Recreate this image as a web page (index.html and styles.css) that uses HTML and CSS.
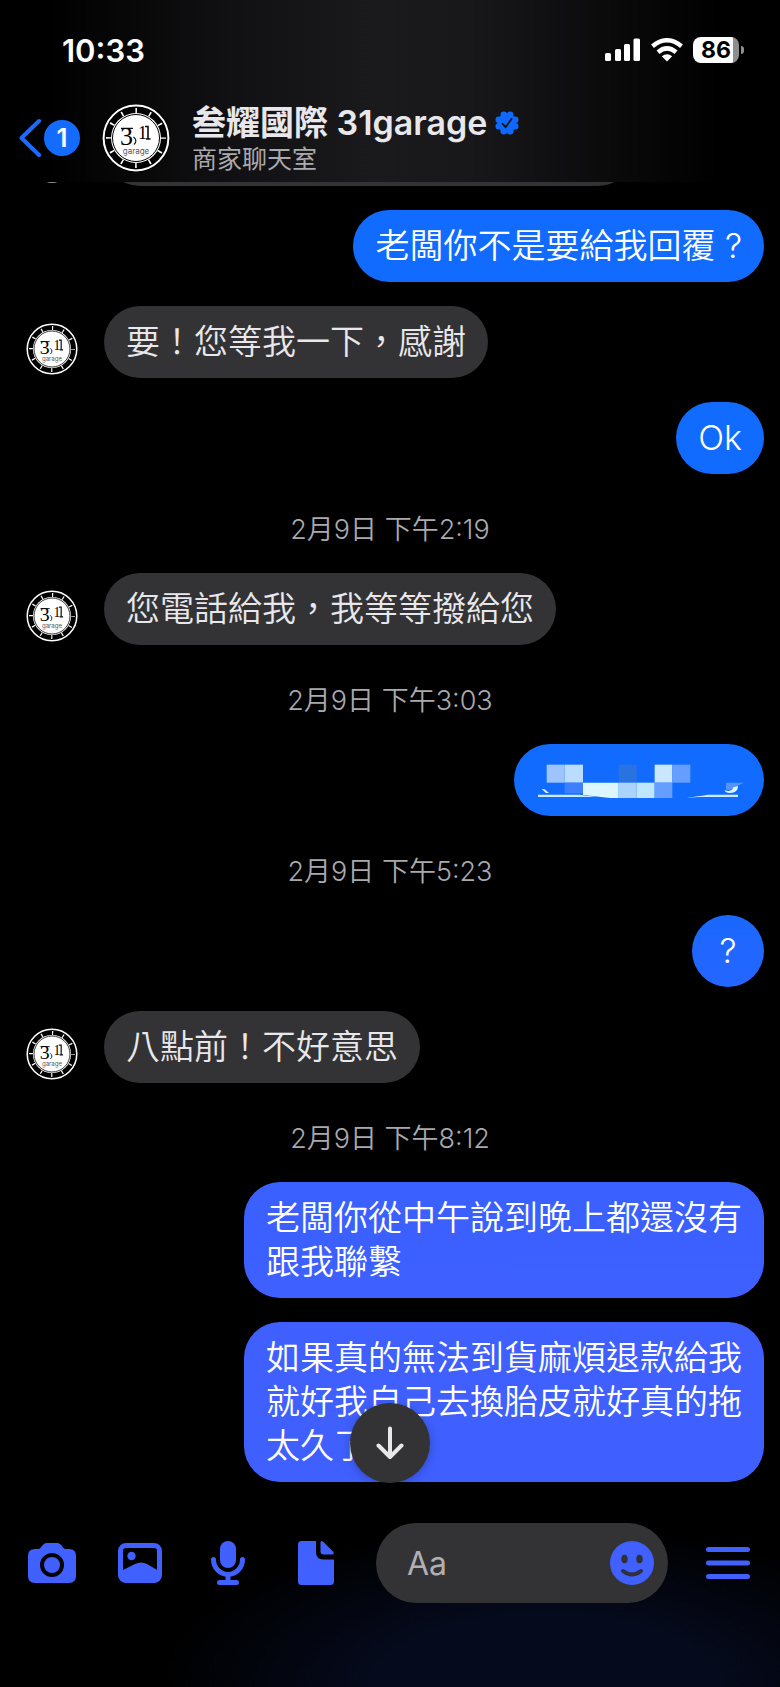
FILE: index.html
```html
<!DOCTYPE html>
<html lang="zh-Hant">
<head>
    <meta charset="UTF-8">
    <meta name="viewport" content="width=device-width, initial-scale=1.0">
    <title>叁耀國際 31garage</title>
    <link rel="stylesheet" href="styles.css">
</head>
<body>
    <svg class="sprite" aria-hidden="true">
        <symbol id="logo" viewBox="0 0 68 68">
            <circle cx="34" cy="34" r="34" fill="#000"/>
            <circle cx="34" cy="34" r="32.400" fill="none" stroke="#fff" stroke-width="2"/>
            <circle cx="34" cy="34" r="27.500" fill="none" stroke="#fff" stroke-width="5" stroke-dasharray="1.600 12.799" stroke-dashoffset="0.8"/>
            <circle cx="34" cy="34" r="25" fill="#fff"/>
            <circle cx="34" cy="34" r="23.500" fill="none" stroke="#000" stroke-width="1"/>
            <path d="M19 24.300H31M31.500 33q4.500 3.500 0.500 7.500" fill="none" stroke="#111" stroke-width="1.2"/>
            <text x="18" y="41" class="logo-three">3</text>
            <text x="36" y="35" class="logo-one">1</text>
            <path d="M43 22.5h3V35M44 35h4.500" fill="none" stroke="#111" stroke-width="1.6"/>
            <text x="34" y="50" class="logo-name">garage</text>
        </symbol>
    </svg>

    <header class="top">
        <div class="status-bar">
            <span class="clock">10:33</span>
            <div class="status-icons">
                <svg width="36" height="24" viewBox="0 0 36 24" fill="#fff">
                    <rect x="0" y="15" width="6" height="8" rx="1.5"/>
                    <rect x="10" y="11" width="6" height="12" rx="1.5"/>
                    <rect x="19" y="6" width="6" height="17" rx="1.5"/>
                    <rect x="28.500" y="0.500" width="6.500" height="22.500" rx="1.5"/>
                </svg>
                <svg width="32" height="24" viewBox="0 0 32 24" fill="none" stroke="#fff" stroke-width="4.500">
                    <path d="M1.500 8.200Q16 -3.600 30.500 8.200"/>
                    <path d="M7 14.200Q16 6.600 25 14.200"/>
                    <path d="M16 23.500L10.800 18.300Q16 14.300 21.200 18.300Z" fill="#fff" stroke="none"/>
                </svg>
                <div class="battery"><span>86</span></div>
            </div>
        </div>
        <div class="chat-bar">
            <a href="#" class="back" aria-label="返回">
                <svg width="24" height="40" viewBox="0 0 24 40" fill="none" stroke="#1a6cff" stroke-width="4" stroke-linecap="round" stroke-linejoin="round"><path d="M20 3L2.500 20L20 37"/></svg>
                <span class="unread">1</span>
            </a>
            <svg class="logo-large"><use href="#logo"/></svg>
            <div class="chat-title">
                <h1>叁耀國際 31garage
                    <svg width="24" height="24" viewBox="0 0 24 24">
                        <g fill="#0f69ff">
                            <circle cx="12" cy="12" r="9.500"/>
                            <circle cx="15.200" cy="3.800" r="3.300"/><circle cx="20.200" cy="8.800" r="3.300"/>
                            <circle cx="20.200" cy="15.200" r="3.300"/><circle cx="15.200" cy="20.200" r="3.300"/>
                            <circle cx="8.800" cy="20.200" r="3.300"/><circle cx="3.800" cy="15.200" r="3.300"/>
                            <circle cx="3.800" cy="8.800" r="3.300"/><circle cx="8.800" cy="3.800" r="3.300"/>
                        </g>
                        <path d="M7.500 12.800l3.200 3.200 5.800-8" fill="none" stroke="#141416" stroke-width="1.800" stroke-linecap="round"/>
                    </svg>
                </h1>
                <p>商家聊天室</p>
            </div>
        </div>
    </header>

    <main class="messages">
        <!-- older message, scrolled under the header -->
        <div class="row" aria-hidden="true">
            <svg class="avatar"><use href="#logo"/></svg>
            <div class="bubble older"></div>
        </div>
        <div class="row mine"><div class="bubble">老闆你不是要給我回覆 ?</div></div>
        <div class="row">
            <svg class="avatar"><use href="#logo"/></svg>
            <div class="bubble">要！您等我一下，感謝</div>
        </div>
        <div class="row mine"><div class="bubble">Ok</div></div>

        <time class="stamp">2月9日 下午2:19</time>
        <div class="row">
            <svg class="avatar"><use href="#logo"/></svg>
            <div class="bubble">您電話給我，我等等撥給您</div>
        </div>

        <time class="stamp">2月9日 下午3:03</time>
        <div class="row mine">
            <div class="bubble">
                <!-- hidden phone number -->
                <svg class="mosaic" width="206" height="44" viewBox="108 81 618 132">
                    <path d="M114 191H714V198H600L556 200Q590 193 625 191H240L290 198H114Z" fill="#c9eaff"/>
                    <path d="M240 191H625L556 201H330Z" fill="#116bff"/>
                    <rect x="140" y="101" width="54" height="54" fill="#9dc4ff"/>
                    <rect x="194" y="101" width="55" height="54" fill="#b9dcff"/>
                    <rect x="194" y="155" width="55" height="32" fill="#3c80ff"/>
                    <path d="M249 155H356V201H330L249 192Z" fill="#dcf6ff"/>
                    <rect x="356" y="101" width="54" height="54" fill="#2873e0"/>
                    <rect x="356" y="155" width="54" height="46" fill="#acd3ff"/>
                    <rect x="410" y="155" width="54" height="46" fill="#bee6ff"/>
                    <rect x="464" y="101" width="53" height="54" fill="#cbe7ff"/>
                    <rect x="464" y="155" width="53" height="46" fill="#659eff"/>
                    <rect x="517" y="101" width="54" height="54" fill="#659eff"/>
                    <path d="M678 155H732L712 164L700 176H678Z" fill="#5594fb"/>
                    <path d="M714 165Q714 186 690 186Q676 186 674 178Q697 184 700 169Z" fill="#e4f8ff"/>
                    <path d="M125 174L134 175L147 186H138Z" fill="#e4f8ff"/>
                </svg>
            </div>
        </div>

        <time class="stamp">2月9日 下午5:23</time>
        <div class="row mine"><div class="bubble">?</div></div>
        <div class="row">
            <svg class="avatar"><use href="#logo"/></svg>
            <div class="bubble">八點前！不好意思</div>
        </div>

        <time class="stamp">2月9日 下午8:12</time>
        <div class="row mine"><div class="bubble">老闆你從中午說到晚上都還沒有跟我聯繫</div></div>
        <div class="row mine"><div class="bubble">如果真的無法到貨麻煩退款給我就好我自己去換胎皮就好真的拖太久了</div></div>
    </main>

    <footer class="composer">
        <button type="button" class="scroll-down" aria-label="捲到最新訊息">
            <svg width="28" height="34" viewBox="0 0 28 34" fill="none" stroke="#e8e8ec" stroke-width="4" stroke-linecap="round" stroke-linejoin="round"><path d="M14 2.500V31M2.500 19.500L14 31L25.500 19.500"/></svg>
        </button>
        <div class="tools">
            <button type="button" aria-label="相機">
                <svg viewBox="0 0 48 48">
                    <path d="M7 10H10.500C13.500 10 14 4 19 4H29C34 4 34.500 10 37.500 10H41Q48 10 48 17V37Q48 44 41 44H7Q0 44 0 37V17Q0 10 7 10Z"/>
                    <circle cx="24" cy="26" r="10" fill="none" stroke="#010208" stroke-width="4"/>
                </svg>
            </button>
            <button type="button" aria-label="相片">
                <svg viewBox="0 0 48 48">
                    <rect x="4.500" y="6.500" width="39" height="35" rx="5.500" fill="none" stroke="#4060ff" stroke-width="5"/>
                    <circle cx="15.500" cy="17" r="4.200"/>
                    <path d="M5 32L19 25Q25 22 31 25L43 32V39Q43 42 40 42H8Q5 42 5 39Z"/>
                </svg>
            </button>
            <button type="button" aria-label="錄音">
                <svg viewBox="0 0 48 48">
                    <rect x="16" y="2" width="16" height="27" rx="8"/>
                    <path d="M9.500 20.500A14.500 15 0 0 0 38.500 20.500M24 36V43M15.500 43.500H32.500" fill="none" stroke="#4060ff" stroke-width="5" stroke-linecap="round"/>
                </svg>
            </button>
            <button type="button" aria-label="檔案">
                <svg viewBox="0 0 48 48">
                    <path d="M9.500 2H24V13Q24 20.500 31.500 20.500H42V42.500Q42 46 38.500 46H9.500Q6 46 6 42.500V5.500Q6 2 9.500 2Z"/>
                    <path d="M28.500 3.500Q28.500 1 31 2.500L41 12.500Q43 15.500 40 15.500H31.500Q28.500 15.500 28.500 12.500Z"/>
                </svg>
            </button>
        </div>
        <div class="field">
            <input type="text" placeholder="Aa" aria-label="訊息">
            <button type="button" aria-label="表情符號">
                <svg viewBox="0 0 44 44">
                    <circle cx="22" cy="22" r="22"/>
                    <g fill="#303036"><ellipse cx="14.500" cy="18" rx="3.200" ry="4.300"/><ellipse cx="29.500" cy="18" rx="3.200" ry="4.300"/></g>
                    <path d="M13 30Q22 37 31 30" fill="none" stroke="#303036" stroke-width="4" stroke-linecap="round"/>
                </svg>
            </button>
        </div>
        <button type="button" aria-label="選單">
            <svg viewBox="0 0 48 48"><path d="M4.500 10.500H43.500M4.500 24H43.500M4.500 37.500H43.500" stroke="#4060ff" stroke-width="5" stroke-linecap="round"/></svg>
        </button>
    </footer>
</body>
</html>
```

FILE: styles.css
```css
* {
    box-sizing: border-box;
}

body {
    display: flex;
    flex-direction: column;
    height: 100vh;
    margin: 0;
    background: #000;
    color: #e8e8ec;
    font-family: Inter, "Noto Sans CJK TC", sans-serif;
    overflow: hidden;
}

svg {
    display: block;
    flex: none;
}

.sprite {
    display: none;
}

button {
    flex: none;
    padding: 0;
    border: none;
    background: none;
    cursor: pointer;
}

/* header */

.top {
    flex: none;
    padding: 32px 36px 10px 19px;
    background: linear-gradient(90deg, #000 6%, #111113 30%, #1a1a1c 48%, #18181a 60%, #060607 84%, #000 92%);
}

.status-bar {
    display: flex;
    align-items: center;
    justify-content: space-between;
    height: 36px;
    padding-left: 43px;
}

.clock {
    color: #fff;
    font-size: 31px;
    font-weight: 600;
}

.status-icons {
    display: flex;
    align-items: center;
    gap: 10px;
}

.battery {
    display: flex;
    align-items: center;
    justify-content: center;
    position: relative;
    width: 46px;
    height: 26px;
    margin-right: 5px;
    border-radius: 8px;
    background: linear-gradient(90deg, #fff 86%, #8e8e90 86%);
    color: #000;
    font-size: 23px;
    font-weight: 700;
}

.battery::after {
    content: "";
    position: absolute;
    right: -5px;
    width: 3px;
    height: 8px;
    border-radius: 0 4px 4px 0;
    background: #8e8e90;
}

.chat-bar {
    display: flex;
    align-items: center;
    height: 68px;
    margin-top: 36px;
}

.back {
    display: flex;
    align-items: center;
    gap: 1px;
    text-decoration: none;
}

.unread {
    width: 36px;
    height: 36px;
    border-radius: 50%;
    background: #146cff;
    color: #fff;
    font-size: 26px;
    font-weight: 600;
    line-height: 36px;
    text-align: center;
}

.logo-large {
    width: 68px;
    height: 68px;
    margin: 0 22px;
}

.logo-three {
    font: 26px "Liberation Serif", serif;
}

.logo-one {
    font: 18px "Liberation Serif", serif;
}

.logo-name {
    font: 8px Inter, sans-serif;
    fill: #555;
    text-anchor: middle;
}

.chat-title {
    padding-top: 2px;
}

.chat-title h1 {
    display: flex;
    align-items: center;
    gap: 8px;
    margin: 0;
    font-size: 34px;
    font-weight: 600;
    line-height: 40px;
}

.chat-title p {
    margin: 0;
    color: #a9a9ae;
    font-size: 25px;
    line-height: 32px;
}

/* conversation, kept at its newest message */

.messages {
    display: flex;
    flex: 1;
    flex-direction: column;
    justify-content: flex-end;
    gap: 24px;
    min-height: 0;
    padding: 0 16px;
    overflow: hidden;
}

.row {
    display: flex;
    flex: none;
    align-items: flex-end;
    gap: 26px;
    padding-left: 10px;
}

.mine {
    justify-content: flex-end;
}

.avatar {
    width: 52px;
    height: 52px;
    margin-bottom: 3px;
}

.bubble {
    display: flex;
    justify-content: center;
    min-width: 72px;
    max-width: 520px;
    min-height: 72px;
    padding: 14px 22px;
    border-radius: 36px;
    background: #333335;
    font-size: 34px;
    font-weight: 350;
    line-height: 44px;
}

.mine .bubble {
    background: linear-gradient(#116bff 50%, #1f67ff 56%, #3a60ff 70%, #3f60ff 80%) fixed;
    color: #fff;
}

.older {
    width: 530px;
    max-width: none;
}

.mosaic {
    overflow: visible;
}

.stamp {
    flex: none;
    padding-top: 12px;
    color: #a9a9ae;
    font-size: 27px;
    font-weight: 350;
    line-height: 39px;
    text-align: center;
}

/* composer */

.composer {
    display: flex;
    flex: none;
    align-items: center;
    gap: 36px;
    position: relative;
    padding: 41px 28px 84px;
    background: radial-gradient(ellipse 50% 80% at 70% 100%, #050a1c 45%, #000 100%);
}

.composer button {
    width: 48px;
    height: 48px;
}

.composer button svg {
    fill: #4060ff;
}

.tools {
    display: flex;
    gap: 40px;
}

.field {
    display: flex;
    flex: 1;
    align-items: center;
    min-width: 0;
    height: 80px;
    padding: 0 14px 0 31px;
    border-radius: 40px;
    background: #333335;
}

.field input {
    flex: 1;
    min-width: 0;
    padding: 0;
    border: none;
    outline: none;
    background: none;
    color: #e8e8ec;
    font: 32px Inter, "Noto Sans CJK TC", sans-serif;
}

.field input::placeholder {
    color: #b0b0b4;
    opacity: 1;
}

.field button {
    width: 44px;
    height: 44px;
}

.composer .scroll-down {
    display: flex;
    align-items: center;
    justify-content: center;
    position: absolute;
    top: -79px;
    left: calc(50% - 40px);
    width: 80px;
    height: 80px;
    border-radius: 50%;
    background: #333335;
    box-shadow: 0 2px 10px rgba(0, 0, 0, 0.25);
}

.composer .scroll-down svg {
    fill: none;
}
```
